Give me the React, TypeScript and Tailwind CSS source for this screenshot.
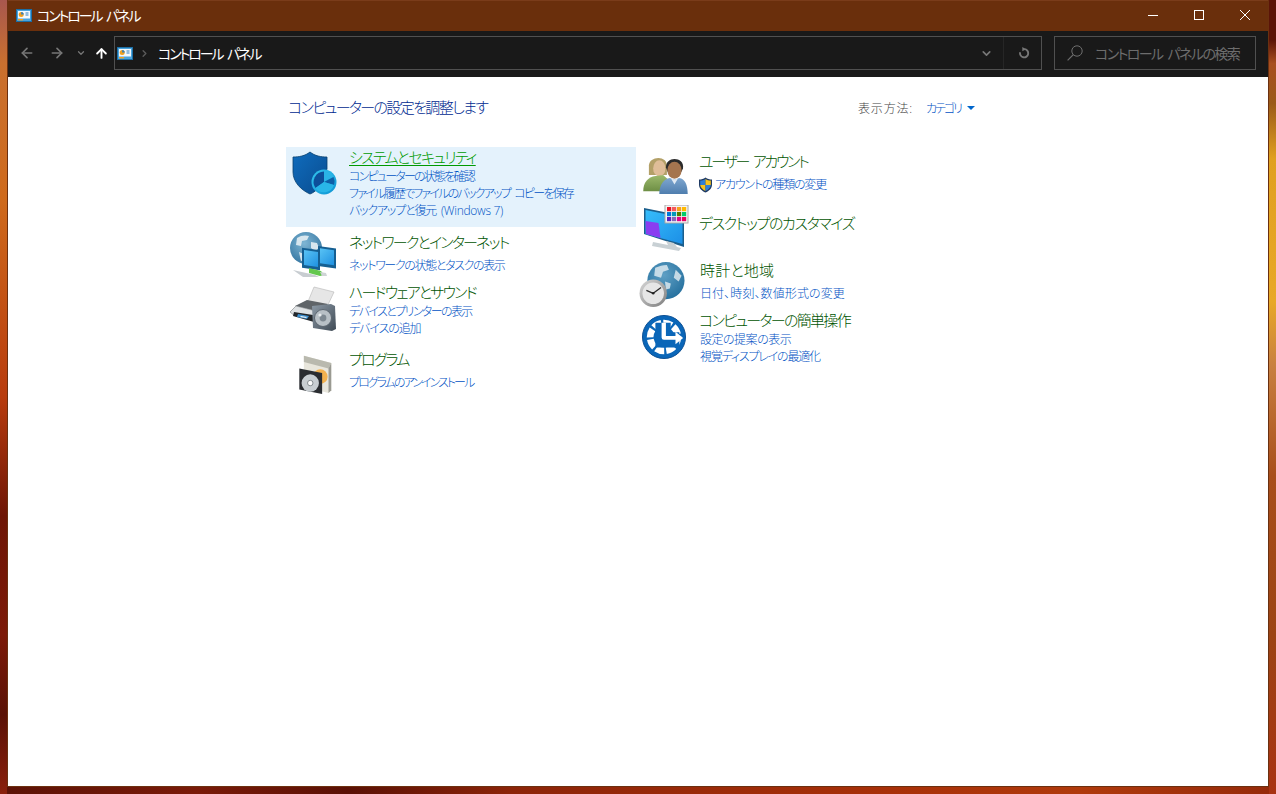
import React from "react";
import { ArrowLeft, ArrowRight, ArrowUp, ChevronDown, ChevronRight } from "lucide-react";

const PanelIcon = () => (
  <svg width="16" height="13" viewBox="0 0 16 13">
    <rect x="0.5" y="0.5" width="15" height="12" fill="#4aa3dc" stroke="#1c6ea4" />
    <rect x="2" y="2" width="12" height="7.5" fill="#f4f8fb" />
    <circle cx="5.2" cy="5.6" r="2.5" fill="#f0a020" />
    <path d="M5.2 5.6V3.1a2.5 2.5 0 0 1 2.5 2.5z" fill="#2f7fc0" />
    <path d="M9.5 4h3M9.5 6h3" stroke="#2f7fc0" />
    <rect x="2" y="10" width="5" height="1.4" fill="#f0a020" />
  </svg>
);

const ShieldIcon = () => (
  <svg width="48" height="48" viewBox="0 0 48 48">
    <defs>
      <linearGradient id="sh" x1="0" y1="0" x2="1" y2="1">
        <stop offset="0" stopColor="#0f6cbd" />
        <stop offset="1" stopColor="#0a4c8f" />
      </linearGradient>
      <linearGradient id="pie" x1="0" y1="0" x2="1" y2="1">
        <stop offset="0" stopColor="#34c5ee" />
        <stop offset="1" stopColor="#0c93d2" />
      </linearGradient>
    </defs>
    <path d="M21 2C16 6 10 7 4 7v15c0 10 8 18 17 22 3-1 5-3 8-5l9-20V7C32 7 26 6 21 2z" fill="url(#sh)" stroke="#07406f" strokeWidth="0.8" />
    <circle cx="35" cy="32" r="12.5" fill="url(#pie)" />
    <path d="M35 32V20.500a11.500 11.500 0 0 1 10 6z" fill="#2ab4e6" />
    <path d="M35 32V21.500a10.500 10.500 0 0 0-8.500 16.500z" fill="#0d4f9a" />
    <path d="M35 32l9.500-5a10.500 10.500 0 0 1 .5 8z" fill="#0d5fa8" />
    <path d="M26.500 38a10.500 10.500 0 0 0 18.500-3l-10-3z" fill="#29b6e8" />
  </svg>
);

const NetworkIcon = () => (
  <svg width="48" height="46" viewBox="0 0 48 46">
    <defs>
      <radialGradient id="globe" cx="0.45" cy="0.35" r="0.75">
        <stop offset="0" stopColor="#7fb6d4" />
        <stop offset="1" stopColor="#2d6f9c" />
      </radialGradient>
      <linearGradient id="scr" x1="0" y1="0" x2="1" y2="1">
        <stop offset="0" stopColor="#59c3f5" />
        <stop offset="1" stopColor="#1e90e0" />
      </linearGradient>
    </defs>
    <circle cx="17" cy="16" r="16" fill="url(#globe)" />
    <path d="M8 6c4-3 9-3 12-2l-2 4-5 1-1 5-5-1zM22 10l6 1 2 5-4 3-4-3zM10 20l5 2 1 6-4 1z" fill="#d7e6ee" />
    <path d="M4 38l22 5 4 2H14z" fill="#c8cdd1" />
    <rect x="13" y="16" width="18" height="20" fill="#155f92" transform="skewY(8) translate(0 -2)" />
    <rect x="15" y="18" width="14" height="15" fill="url(#scr)" transform="skewY(8) translate(0 -2)" />
    <rect x="29" y="13" width="18" height="20" fill="#155f92" transform="skewY(8) translate(0 -3)" />
    <rect x="31" y="15" width="14" height="15" fill="url(#scr)" transform="skewY(8) translate(0 -3)" />
    <path d="M20 36l12 3 3 4-4 1-11-3z" fill="#63c74d" />
    <path d="M31 40l6 1 1 3-5 0z" fill="#cfd4d6" />
  </svg>
);

const HardwareIcon = () => (
  <svg width="48" height="46" viewBox="0 0 48 46">
    <defs>
      <linearGradient id="spk" x1="0" y1="0" x2="1" y2="1">
        <stop offset="0" stopColor="#8d9aa6" />
        <stop offset="1" stopColor="#3f4a55" />
      </linearGradient>
    </defs>
    <path d="M25 2l20 5-7 15-20-3z" fill="#e6e6e6" stroke="#b5b5b5" strokeWidth="0.6" />
    <path d="M6 21l12-6 21 4-8 8z" fill="#5f6468" />
    <path d="M1 27l6-6 24 6v6L6 31z" fill="#dfe2e4" stroke="#7b7f83" strokeWidth="0.6" />
    <path d="M5 27l19 3 5 2-4 5L4 31z" fill="#23272b" />
    <path d="M9 29l11 2-2 3-10-2z" fill="#3a8fd0" />
    <path d="M12 31l6 1-1 1-6-1z" fill="#f2f2f2" />
    <path d="M23 21l19-2 4 2 1 23-4 2-19-3z" fill="url(#spk)" />
    <circle cx="34" cy="33" r="8.5" fill="#b8c0c6" stroke="#5c6670" />
    <circle cx="34" cy="33" r="3.4" fill="#7d8891" />
    <circle cx="31" cy="30" r="1.6" fill="#e8ecee" />
  </svg>
);

const ProgramIcon = () => (
  <svg width="48" height="42" viewBox="0 0 48 46">
    <path d="M14 4l30 8v30l-3 3L14 38z" fill="#e8e6dc" />
    <path d="M14 4l30 8-3 6-27-7z" fill="#b9b9ae" />
    <path d="M41 18l3-6v30l-3 3z" fill="#9a9a92" />
    <circle cx="32" cy="27" r="8" fill="#f3b14e" />
    <path d="M9 18l25 5v23l-25-5z" fill="#2a2d31" />
    <circle cx="21" cy="34" r="9.5" fill="#c8ced2" />
    <circle cx="21" cy="34" r="3" fill="#fdfdfd" stroke="#7c8488" />
  </svg>
);

const UsersIcon = () => (
  <svg width="46" height="36" viewBox="0 0 48 38">
    <defs>
      <linearGradient id="gr" x1="0" y1="0" x2="0" y2="1">
        <stop offset="0" stopColor="#9cb96c" />
        <stop offset="1" stopColor="#6e8f45" />
      </linearGradient>
      <linearGradient id="bl" x1="0" y1="0" x2="0" y2="1">
        <stop offset="0" stopColor="#7ea6cf" />
        <stop offset="1" stopColor="#4f7eae" />
      </linearGradient>
    </defs>
    <path d="M7 8c0-5 5-8 10-8s9 3 9 8v10H7z" fill="#b3a068" />
    <ellipse cx="18" cy="11" rx="6.5" ry="8.5" fill="#dfbd98" />
    <path d="M1 35c0-9 5-15 13-16l8-1 8 7-2 10z" fill="url(#gr)" />
    <path d="M25 10c0-6 4-9 9-9s10 3 9 10l-2 4H27z" fill="#2b2b2b" />
    <ellipse cx="34" cy="13" rx="7.5" ry="9" fill="#a5754f" />
    <path d="M18 38c0-10 5-16 11-17l5 2 5-2c6 1 9 7 9 17z" fill="url(#bl)" />
    <path d="M30 21l4 7 4-7-4 2z" fill="#dfe9f3" />
  </svg>
);

const UacShield = () => (
  <svg width="15" height="16" viewBox="0 0 15 16">
    <path d="M7.5.5c2 1.4 4 2 6.500 2v5c0 4-3 6.500-6.500 8C4 14 1 11.500 1 7.500v-5c2.500 0 4.500-.6 6.500-2z" fill="#1f3a63" />
    <path d="M7.500 2v6H2.200V3.600c2 0 3.700-.5 5.300-1.600z" fill="#2f7fd6" />
    <path d="M7.500 2c1.600 1.100 3.300 1.600 5.300 1.600V8H7.500z" fill="#f7c21a" />
    <path d="M2.200 8h5.300v6c-2.700-1.300-5-3.200-5.300-6z" fill="#f7c21a" />
    <path d="M7.500 8h5.300c-.3 2.800-2.600 4.700-5.300 6z" fill="#2f7fd6" />
  </svg>
);

const swatches = [
  "#e81123", "#f45b5b", "#f7a11a", "#ffb900",
  "#0078d7", "#0099bc", "#567c00", "#00cc6a",
  "#5a1fc0", "#8764b8", "#e3008c", "#ea005e",
];

const DesktopIcon = () => (
  <svg width="48" height="46" viewBox="0 0 48 46">
    <defs>
      <linearGradient id="desk" x1="0" y1="0" x2="1" y2="1">
        <stop offset="0" stopColor="#36bdfb" />
        <stop offset="1" stopColor="#1c8fe6" />
      </linearGradient>
    </defs>
    <path d="M1 3l40 8v31L1 29z" fill="#1b5e8c" />
    <path d="M2.500 5l37 7.500V39l-37-10z" fill="url(#desk)" />
    <path d="M2.500 16l13 2 2 15-14.500-4z" fill="#8a3df0" />
    <path d="M10 37l15 3-2-4 8 2 3 4 4 1-2 3-27-5z" fill="#c8d0d4" />
    <rect x="22" y="0" width="23" height="18" fill="#f5f5f5" stroke="#a8a8a8" />
    {swatches.map((c, i) => (
      <rect key={i} x={24 + (i % 4) * 5} y={2 + Math.floor(i / 4) * 5} width="4.200" height="4.200" fill={c} />
    ))}
  </svg>
);

const ClockIcon = () => (
  <svg width="48" height="45" viewBox="0 0 48 46">
    <defs>
      <radialGradient id="gl2" cx="0.45" cy="0.35" r="0.75">
        <stop offset="0" stopColor="#5e9fc4" />
        <stop offset="1" stopColor="#1f6b9a" />
      </radialGradient>
      <linearGradient id="rim" x1="0" y1="0" x2="1" y2="1">
        <stop offset="0" stopColor="#d8d8d8" />
        <stop offset="1" stopColor="#7d7d7d" />
      </linearGradient>
    </defs>
    <circle cx="27" cy="19" r="19" fill="url(#gl2)" />
    <path d="M16 6c4-2 8-3 12-3l2 5-6 2-2 6-7-2zM37 8l6 6-3 6-5-4zM26 20l6 2-1 5-4 1z" fill="#dbe8ef" opacity="0.85" />
    <circle cx="14" cy="32" r="14" fill="url(#rim)" />
    <circle cx="14" cy="32" r="11" fill="#e6e6e6" />
    <path d="M14 32l-7-3M14 32l8-6" stroke="#2a2a2a" strokeWidth="1.300" />
    <circle cx="14" cy="32" r="1.300" fill="#222" />
  </svg>
);

const EaseIcon = () => (
  <svg width="44" height="44" viewBox="0 0 46 46">
    <circle cx="23" cy="23" r="22.500" fill="#0a66b8" stroke="#0a4e92" />
    <circle cx="23" cy="23" r="14.500" fill="none" stroke="#fff" strokeWidth="7" strokeDasharray="9 2.200" />
    <path d="M14 8h16v10h9v16H14z" fill="#0a66b8" />
    <circle cx="23" cy="24" r="9" fill="#0a66b8" />
    <path d="M20.500 8h4.500v14h10v-4.500l8 6.500-8 6.500V26H23a2.500 2.500 0 0 1-2.500-2.500z" fill="#fff" />
  </svg>
);

type Line = { text: React.ReactNode; cls: string };

type CategoryProps = {
  icon: React.ReactNode;
  title: string;
  titleCls: string;
  links: Line[];
  hot?: boolean;
  className?: string;
  iconClass?: string;
};

const Category = ({ icon, title, titleCls, links, hot, className, iconClass }: CategoryProps) => (
  <div className={`flex ${hot ? "bg-[#e4f2fc]" : ""} ${className ?? ""}`}>
    <div className={`h-0 w-[63px] shrink-0 ${iconClass ?? ""}`}>{icon}</div>
    <div className="flex flex-col whitespace-nowrap">
      <a className={`text-[15px] leading-[21px] ${titleCls} ${hot ? "text-[#009a00] underline underline-offset-2" : "text-[#005400]"}`}>
        {title}
      </a>
      <div className={links.length === 1 ? "mt-1 flex flex-col" : "flex flex-col"}>
        {links.map((l, i) => (
          <a key={i} className={`text-[12px] leading-[17px] text-[#0052c4] ${l.cls}`}>
            {l.text}
          </a>
        ))}
      </div>
    </div>
  </div>
);

export default function App() {
  return (
    <div className="flex h-[794px] w-[1276px] overflow-hidden bg-[#7a1d08] font-light [font-family:'Open_Sans','Noto_Sans_CJK_JP',sans-serif] [font-feature-settings:'palt']">
      <div className="w-[7px] shrink-0 bg-[linear-gradient(180deg,#a8574e_0%,#c9702f_8%,#cf6a1c_25%,#b83c0e_50%,#6e1606_65%,#7c1a08_80%,#5a1206_90%,#8a200c_100%)]" />
      <div className="flex w-[1262px] shrink-0 flex-col">
        <div className="flex h-[787px] flex-col border-x border-b border-[#6b3010] bg-white">
          <div className="flex h-[31px] shrink-0 items-center border-t border-[#7a3c1a] bg-[#6a2f0c] pb-[2px] pl-2 text-white">
            <PanelIcon />
            <span className="ml-[5px] whitespace-nowrap text-[14px] font-normal tracking-[-2.1px] [word-spacing:3px]">コントロール パネル</span>
            <div className="ml-auto flex items-center">
              <button className="flex w-[46px] justify-center">
                <svg width="10" height="10" viewBox="0 0 10 10"><path d="M0 5.500h10" stroke="#fff" /></svg>
              </button>
              <button className="flex w-[46px] justify-center">
                <svg width="10" height="10" viewBox="0 0 10 10"><rect x="0.500" y="0.500" width="9" height="9" fill="none" stroke="#fff" /></svg>
              </button>
              <button className="flex w-[46px] justify-center">
                <svg width="10" height="10" viewBox="0 0 10 10"><path d="M0 0l10 10M10 0L0 10" stroke="#fff" /></svg>
              </button>
            </div>
          </div>
          <div className="flex h-[46px] shrink-0 items-center bg-[#191919] pb-[2px] pl-[11px] pr-3">
            <ArrowLeft size={16} strokeWidth={2.500} className="text-[#777777]" />
            <ArrowRight size={16} strokeWidth={2.500} className="ml-[14px] text-[#777777]" />
            <ChevronDown size={10} strokeWidth={3} className="ml-[11px] text-[#777777]" />
            <ArrowUp size={15} strokeWidth={3} className="ml-[8px] text-white" />
            <div className="ml-[5px] flex h-[34px] w-[928px] shrink-0 items-center border border-[#505050] pl-[2px]">
              <PanelIcon />
              <ChevronRight size={11} strokeWidth={3} className="ml-[6px] text-[#5a5a5a]" />
              <span className="ml-[8px] whitespace-nowrap text-[14px] font-normal tracking-[-2.1px] text-white [word-spacing:3px]">コントロール パネル</span>
              <ChevronDown size={13} strokeWidth={3} className="ml-auto text-[#777777]" />
              <div className="ml-[10px] h-full w-px bg-[#262626]" />
              <svg width="12" height="12" viewBox="0 0 14 14" className="ml-[14px] mr-[11px]">
                <path d="M7.500 2.500a4.800 4.800 0 1 1-5 3.500" fill="none" stroke="#777777" strokeWidth="2.200" />
                <path d="M5 0l4.500 2.500L5 5z" fill="#777777" />
              </svg>
            </div>
            <div className="ml-[12px] flex h-[34px] w-[202px] shrink-0 items-center border border-[#505050] pl-[12px]">
              <svg width="16" height="16" viewBox="0 0 16 16">
                <circle cx="10" cy="6" r="5.200" fill="none" stroke="#6f6f6f" />
                <path d="M6.300 9.700L.6 15.400" stroke="#6f6f6f" strokeWidth="1.200" />
              </svg>
              <span className="ml-[12px] whitespace-nowrap text-[14px] font-normal tracking-[-1.6px] text-[#6d6d6d] [word-spacing:3px]">コントロール パネルの検索</span>
            </div>
          </div>
          <div className="flex-1 pl-[278px]">
            <div className="flex h-[70px] w-[689px] items-start pt-[18px]">
              <h1 className="pl-[2px] text-[15px] font-light leading-6 tracking-[-1.62px] text-[#002a90]">コンピューターの設定を調整します</h1>
              <span className="ml-auto mt-[5px] text-[12px] tracking-[0.8px] text-[#444444]">表示方法:</span>
              <span className="ml-[13px] mt-[5px] text-[12px] tracking-[-2px] text-[#0052c4]">カテゴリ</span>
              <span className="ml-[6px] mt-[11px] h-0 w-0 border-x-[4px] border-t-[4px] border-x-transparent border-t-[#0066cc]" />
            </div>
            <div className="flex">
              <div className="flex w-[350px] flex-col">
                <Category
                  hot
                  className="h-[80px]"
                  iconClass="pl-[3px] pt-[3px]"
                  icon={<ShieldIcon />}
                  title="システムとセキュリティ"
                  titleCls="tracking-[-1.7px]"
                  links={[
                    { text: "コンピューターの状態を確認", cls: "tracking-[-1.78px]" },
                    { text: "ファイル履歴でファイルのバックアップ コピーを保存", cls: "tracking-[-1.78px] [word-spacing:3px]" },
                    {
                      text: (
                        <>
                          バックアップと復元 <span className="tracking-[-0.3px] [word-spacing:0px]">(Windows 7)</span>
                        </>
                      ),
                      cls: "tracking-[-1.2px] [word-spacing:3px]",
                    },
                  ]}
                />
                <Category
                  className="mt-[5px] h-[50px]"
                  iconClass="pl-[3px]"
                  icon={<NetworkIcon />}
                  title="ネットワークとインターネット"
                  titleCls="tracking-[-1.8px]"
                  links={[{ text: "ネットワークの状態とタスクの表示", cls: "tracking-[-1.36px]" }]}
                />
                <Category
                  className="h-[67px]"
                  iconClass="pl-[3px] pt-[3px]"
                  icon={<HardwareIcon />}
                  title="ハードウェアとサウンド"
                  titleCls="tracking-[-1.8px]"
                  links={[
                    { text: "デバイスとプリンターの表示", cls: "tracking-[-1.6px]" },
                    { text: "デバイスの追加", cls: "tracking-[-1.1px]" },
                  ]}
                />
                <Category
                  iconClass="pl-[3px] pt-[3px]"
                  icon={<ProgramIcon />}
                  title="プログラム"
                  titleCls="tracking-[-1.8px]"
                  links={[{ text: "プログラムのアンインストール", cls: "tracking-[-1.97px]" }]}
                />
              </div>
              <div className="flex w-[350px] flex-col">
                <Category
                  className="h-[66px] pt-[4px]"
                  iconClass="pl-[6px] pt-[7px]"
                  icon={<UsersIcon />}
                  title="ユーザー アカウント"
                  titleCls="tracking-[-2.3px] [word-spacing:3px]"
                  links={[
                    {
                      text: (
                        <span className="-ml-px flex items-center gap-[2px]">
                          <UacShield />
                          アカウントの種類の変更
                        </span>
                      ),
                      cls: "tracking-[-1.2px]",
                    },
                  ]}
                />
                <Category
                  className="h-[47px]"
                  iconClass="-mt-[8px] pl-[7px]"
                  icon={<DesktopIcon />}
                  title="デスクトップのカスタマイズ"
                  titleCls="tracking-[-1.38px]"
                  links={[]}
                />
                <Category
                  className="h-[50px]"
                  iconClass="pl-[3px] pt-[2px]"
                  icon={<ClockIcon />}
                  title="時計と地域"
                  titleCls="tracking-[0.2px] pl-px"
                  links={[{ text: "日付、時刻、数値形式の変更", cls: "tracking-[0.1px] pl-px" }]}
                />
                <Category
                  iconClass="pl-[6px] pt-[5px]"
                  icon={<EaseIcon />}
                  title="コンピューターの簡単操作"
                  titleCls="tracking-[-1.7px]"
                  links={[
                    { text: "設定の提案の表示", cls: "tracking-[-0.5px] pl-px" },
                    { text: "視覚ディスプレイの最適化", cls: "tracking-[-1.2px] pl-px" },
                  ]}
                />
              </div>
            </div>
          </div>
        </div>
        <div className="h-[7px] bg-[linear-gradient(90deg,#5c1206_0%,#7a1a08_15%,#5a1005_27%,#8c2408_40%,#a83008_70%,#b03a0c_85%,#962a0a_100%)]" />
      </div>
      <div className="w-[7px] shrink-0 bg-[linear-gradient(180deg,#5a1408_0%,#5a1408_5%,#a84f20_8%,#9a5a18_13%,#e0a020_20%,#e8a828_38%,#c88040_46%,#a84e1a_60%,#9c4414_80%,#a83212_100%)]" />
    </div>
  );
}
